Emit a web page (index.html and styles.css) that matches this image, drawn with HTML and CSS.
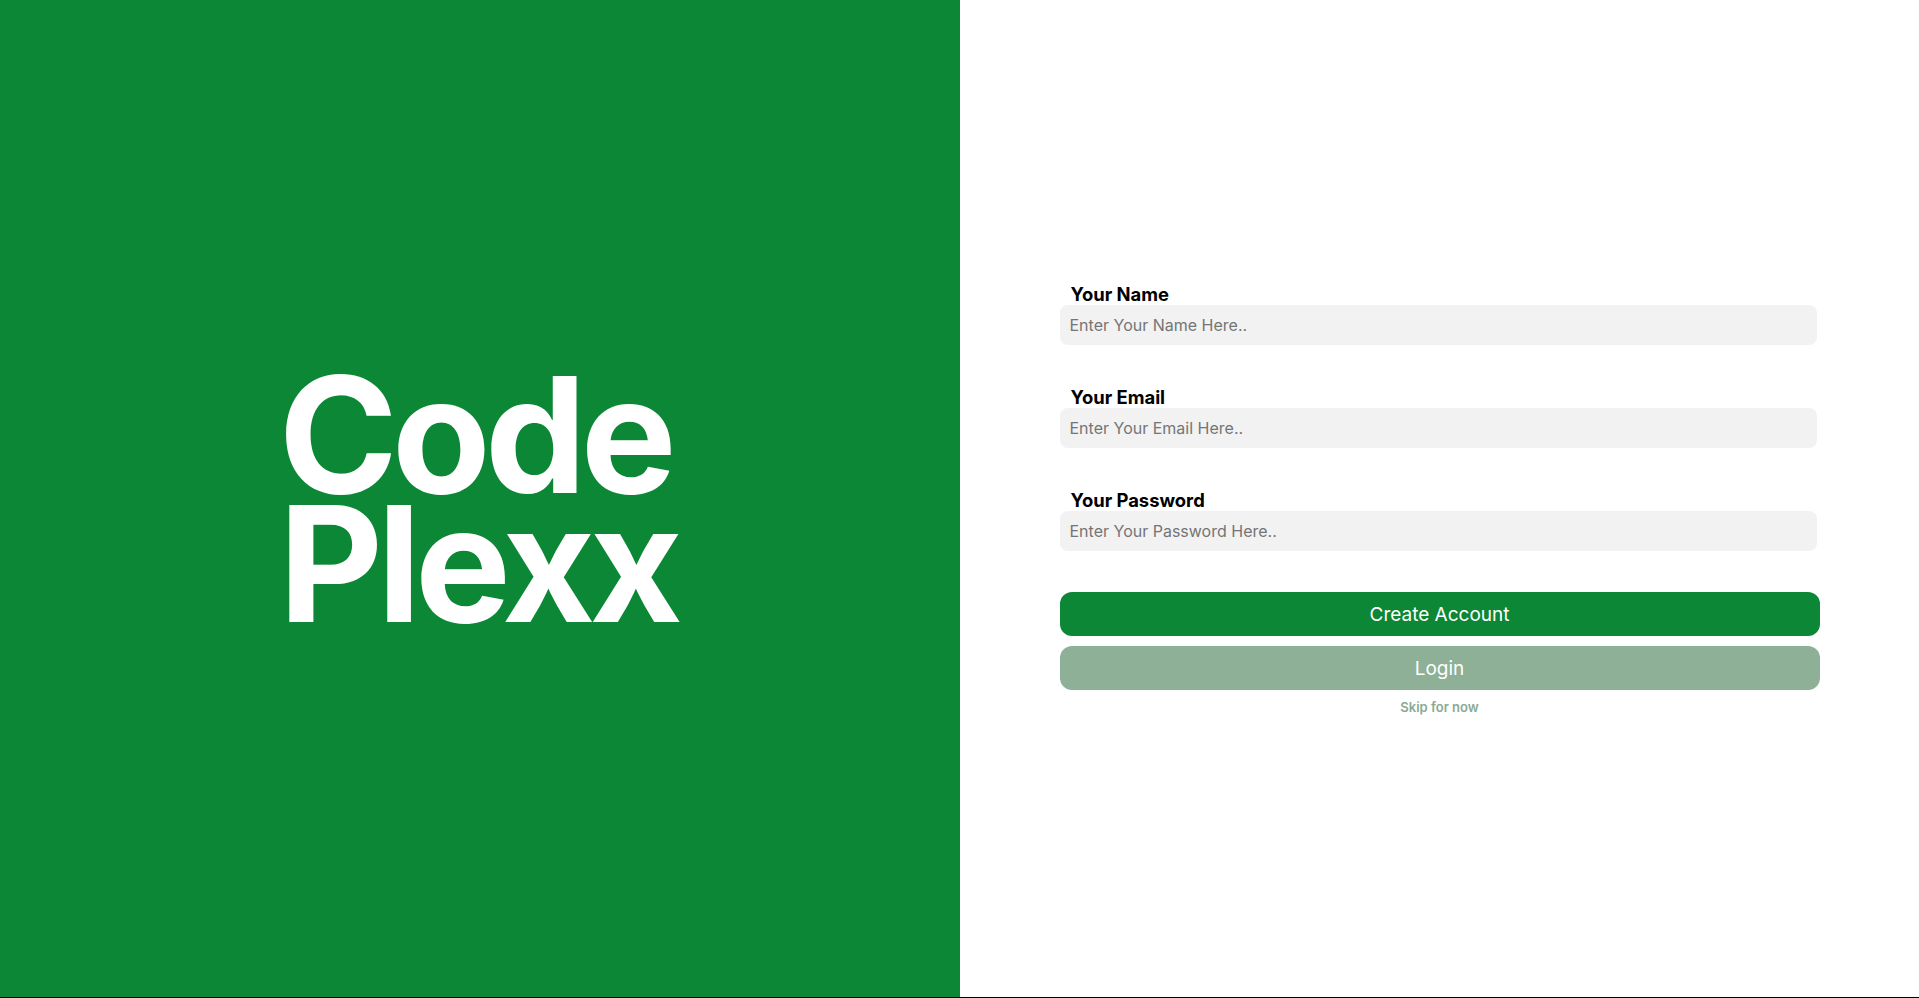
FILE: index.html
```html
<!DOCTYPE html>
<html lang="en">
<head>
<meta charset="utf-8">
<title>CodePlexx</title>
<link rel="stylesheet" href="styles.css">
</head>
<body>
<div class="page">
  <section class="brand">
    <h1 class="brand-title">Code<br>Plexx</h1>
  </section>
  <section class="auth">
    <form class="auth-form">
      <div class="field">
        <label class="field-label" for="name">Your Name</label>
        <input class="field-input" id="name" type="text" placeholder="Enter Your Name Here..">
      </div>
      <div class="field">
        <label class="field-label" for="email">Your Email</label>
        <input class="field-input" id="email" type="email" placeholder="Enter Your Email Here..">
      </div>
      <div class="field">
        <label class="field-label" for="password">Your Password</label>
        <input class="field-input" id="password" type="password" placeholder="Enter Your Password Here..">
      </div>
      <div class="actions">
        <button type="button" class="btn btn-primary">Create Account</button>
        <button type="button" class="btn btn-secondary">Login</button>
        <a class="skip" href="#">Skip for now</a>
      </div>
    </form>
  </section>
</div>
</body>
</html>
```
FILE: styles.css
```css
html {
  background: #000;
}
body {
  margin: 0;
  font-family: Inter, "Liberation Sans", sans-serif;
}
.page {
  display: grid;
  grid-template-columns: 960px 1fr;
  height: calc(100vh - 1px);
  background: #fff;
}
.brand {
  background: #0b8735;
  display: flex;
  align-items: center;
  justify-content: center;
  padding-right: 4px;
}
.brand-title {
  margin: 0;
  color: #fff;
  font-family: Inter, "Liberation Sans", sans-serif;
  font-weight: 700;
  font-size: 161px;
  line-height: 129px;
  letter-spacing: -0.036em;
}
.auth {
  display: flex;
  align-items: center;
  justify-content: center;
  padding-top: 1px;
}
.auth-form {
  width: 760px;
  display: flex;
  flex-direction: column;
}
.field {
  display: flex;
  flex-direction: column;
  margin-bottom: 41px;
}
.field:last-of-type {
  margin-bottom: 40px;
}
.field-label {
  padding-left: 11px;
  font-size: 18.4px;
  font-weight: 700;
  color: #000;
  line-height: 22px;
}
.field-input {
  width: 757px;
  height: 40px;
  box-sizing: border-box;
  border: none;
  outline: none;
  border-radius: 8px;
  background: #f2f2f2;
  padding: 0 10px;
  font-family: Inter, "Liberation Sans", sans-serif;
  font-size: 16px;
  color: #333;
}
.field-input::placeholder {
  color: #757575;
}
.actions {
  display: flex;
  flex-direction: column;
  align-items: center;
  gap: 10px;
}
.btn {
  width: 100%;
  height: 44px;
  border: none;
  border-radius: 12px;
  color: #fff;
  font-family: Inter, "Liberation Sans", sans-serif;
  font-size: 19px;
  cursor: pointer;
}
.btn-primary {
  background: #0b8735;
}
.btn-secondary {
  background: #8db097;
}
.skip {
  margin-top: -1px;
  font-size: 13px;
  font-weight: 600;
  color: #8aa993;
  text-decoration: none;
}
```
